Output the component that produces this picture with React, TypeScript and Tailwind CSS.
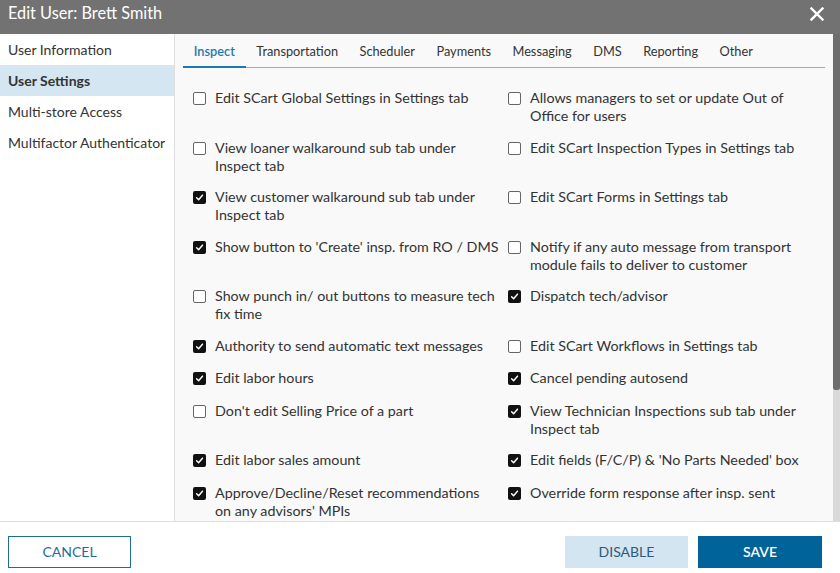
const tabs = ["Inspect", "Transportation", "Scheduler", "Payments", "Messaging", "DMS", "Reporting", "Other"];

const navItems = ["User Information", "User Settings", "Multi-store Access", "Multifactor Authenticator"];

// pairs: [left, right]
const rows: [string, boolean, string, boolean][] = [
  ["Edit SCart Global Settings in Settings tab", false, "Allows managers to set or update Out of Office for users", false],
  ["View loaner walkaround sub tab under Inspect tab", false, "Edit SCart Inspection Types in Settings tab", false],
  ["View customer walkaround sub tab under Inspect tab", true, "Edit SCart Forms in Settings tab", false],
  ["Show button to 'Create' insp. from RO / DMS", true, "Notify if any auto message from transport module fails to deliver to customer", false],
  ["Show punch in/ out buttons to measure tech fix time", false, "Dispatch tech/advisor", true],
  ["Authority to send automatic text messages", true, "Edit SCart Workflows in Settings tab", false],
  ["Edit labor hours", true, "Cancel pending autosend", true],
  ["Don't edit Selling Price of a part", false, "View Technician Inspections sub tab under Inspect tab", true],
  ["Edit labor sales amount", true, "Edit fields (F/C/P) & 'No Parts Needed' box", true],
  ["Approve/Decline/Reset recommendations\non any advisors' MPIs", true, "Override form response after insp. sent", true],
];

function Check({ label, checked }: { label: string; checked: boolean }) {
  return (
    <label className="flex items-start gap-[9px] py-[6.75px] leading-[18px]">
      {checked ? (
        <span className="my-[3px] flex h-[13px] w-[13px] shrink-0 items-center justify-center rounded-[2px] bg-[#111]">
          <svg width="9" height="9" viewBox="0 0 10 10" fill="none">
            <path d="M1.8 5.2 L4 7.4 L8.3 2.4" stroke="white" strokeWidth="1.6" strokeLinecap="round" strokeLinejoin="round" />
          </svg>
        </span>
      ) : (
        <span className="my-[3px] h-[13px] w-[13px] shrink-0 rounded-[2px] border border-[#666] bg-white" />
      )}
      <span className="whitespace-pre-line">{label}</span>
    </label>
  );
}

export default function App() {
  return (
    <div className="flex h-[573px] w-[840px] flex-col overflow-hidden bg-white font-['Lato','Liberation_Sans',sans-serif] text-[#333]">
      <div className="flex h-[34px] shrink-0 items-center justify-between bg-[#727272] pl-[8px] pr-[16px]">
        <span className="mb-[7px] text-[16.3px] text-white">Edit User: Brett Smith</span>
        <svg width="14" height="14" viewBox="0 0 14 14" className="mb-[6px]">
          <path d="M1.5 1.5 L12.5 12.5 M12.5 1.5 L1.5 12.5" stroke="white" strokeWidth="2.4" strokeLinecap="square" />
        </svg>
      </div>

      <div className="flex min-h-0 flex-1">
        <div className="w-[175px] shrink-0 border-r border-[#dedede] bg-white text-[14px]">
          {navItems.map((n, i) => (
            <div
              key={n}
              className={
                i === 1
                  ? "flex h-[31px] items-center bg-[#d4e6f1] pl-[8px] font-bold"
                  : "flex h-[31px] items-center pl-[8px]"
              }
            >
              {n}
            </div>
          ))}
        </div>

        <div className="flex min-w-0 flex-1 bg-[#f9f9f9]">
          <div className="min-w-0 flex-1 overflow-hidden">
            <div className="ml-[8px] mr-[8px] flex h-[34px] border-b border-[#aaa] text-[12.75px]">
              {tabs.map((t, i) => (
                <div
                  key={t}
                  className={
                    i === 0
                      ? "-mb-px flex items-center border-b-2 border-[#1f78ad] px-[10.75px] pt-[3px] font-semibold text-[#1f78ad]"
                      : "flex items-center px-[10.75px] pt-[2px]"
                  }
                >
                  {t}
                </div>
              ))}
            </div>
            <div className="grid grid-cols-[308px_308px] gap-x-[7px] pl-[18px] pt-[14.5px] text-[14.3px]">
              {rows.map(([l, lc, r, rc]) => (
                <>
                  <Check key={l} label={l} checked={lc} />
                  <Check key={r} label={r} checked={rc} />
                </>
              ))}
            </div>
          </div>
          <div className="flex w-[7px] shrink-0 flex-col">
            <div className="h-[356px] rounded-b-[2px] bg-[#6e6e6e]" />
            <div className="flex-1 bg-[#d9d9d9]" />
          </div>
        </div>
      </div>

      <div className="flex h-[52px] shrink-0 items-start border-t border-[#dcdcdc] bg-white pl-[8px] pr-[18px] pt-[14px] text-[14px]">
        <button className="h-[32px] w-[123px] border border-[#1f6c9d] pb-[2px] text-[#1f6c9d]">CANCEL</button>
        <div className="flex-1" />
        <button className="h-[32px] w-[123px] bg-[#d3e5f1] pb-[2px] text-[#2c5a7c]">DISABLE</button>
        <button className="ml-[10px] h-[32px] w-[124px] bg-[#00649a] pb-[2px] font-semibold text-white">SAVE</button>
      </div>
    </div>
  );
}
